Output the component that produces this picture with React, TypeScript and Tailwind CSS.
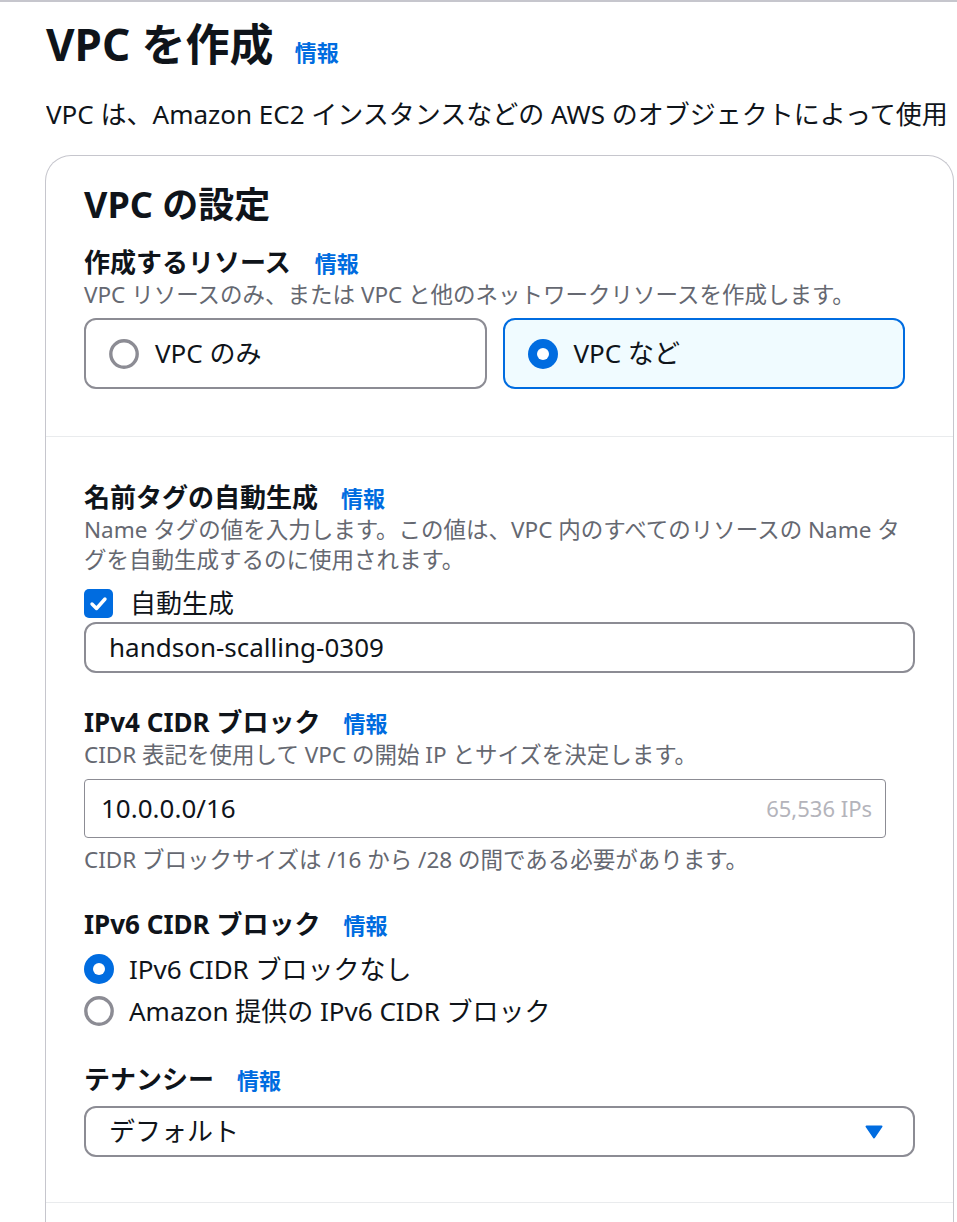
import React from 'react';

const Info = ({ className = '' }: { className?: string }) => (
  <span className={`text-[22px] font-bold text-[#006ce0] ${className}`}>情報</span>
);

const FieldLabel = ({ children, gap = 'ml-[23px]' }: { children: React.ReactNode; gap?: string }) => (
  <div className="flex items-baseline h-[36px] leading-[36px]">
    <span className="text-[26px] font-bold text-[#0f141a]">{children}</span>
    <Info className={gap} />
  </div>
);

const Radio = ({ checked }: { checked: boolean }) => (
  <svg width="30" height="30" viewBox="0 0 30 30" className="shrink-0">
    {checked ? (
      <>
        <circle cx="15" cy="15" r="15" fill="#006ce0" />
        <circle cx="15" cy="15" r="6" fill="#ffffff" />
      </>
    ) : (
      <circle cx="15" cy="15" r="13.2" fill="#ffffff" stroke="#8c8c94" strokeWidth="3.4" />
    )}
  </svg>
);

export default function App() {
  return (
    <div className="min-h-screen w-full overflow-hidden bg-white text-[#0f141a] font-['Noto_Sans','Noto_Sans_CJK_JP',sans-serif]">
      <div className="h-[2px] bg-[#c6c6cd]" />

      <div className="pl-[46px]">
        <div className="flex items-baseline mt-[14px] h-[56px]">
          <h1 className="text-[44px] leading-[56px] font-bold">VPC を作成</h1>
          <Info className="ml-[21px]" />
        </div>
        <p className="mt-[24px] text-[26px] leading-[36px] whitespace-nowrap overflow-hidden">
          VPC は、Amazon EC2 インスタンスなどの AWS のオブジェクトによって使用
        </p>
      </div>

      {/* settings container */}
      <div className="ml-[45px] mt-[23px] w-[909px] border border-b-0 border-[#c6c6cd] rounded-t-[26px]">
        <div className="px-[38px] pt-[27px] pb-[47px]">
          <h2 className="text-[36px] leading-[44px] font-bold">VPC の設定</h2>
          <div className="mt-[17px]">
            <FieldLabel gap="ml-[24px]">作成するリソース</FieldLabel>
          </div>
          <p className="text-[22.5px] leading-[29px] text-[#656871] whitespace-nowrap">
            VPC リソースのみ、または VPC と他のネットワークリソースを作成します。
          </p>
          <div className="mt-[9px] grid grid-cols-2 gap-[16px] w-[821px]">
            <div className="h-[71px] border-2 border-[#8c8c94] rounded-[12px] flex items-center pl-[23px] gap-[16px]">
              <Radio checked={false} />
              <span className="text-[26px]">VPC のみ</span>
            </div>
            <div className="h-[71px] border-2 border-[#006ce0] bg-[#f0fbff] rounded-[12px] flex items-center pl-[23px] gap-[16px]">
              <Radio checked />
              <span className="text-[26px]">VPC など</span>
            </div>
          </div>
        </div>

        <div className="border-t border-[#e9ebed] px-[38px] pt-[42px] pb-[45px]">
          {/* name tag */}
          <FieldLabel>名前タグの自動生成</FieldLabel>
          <p className="text-[22.5px] leading-[30px] text-[#656871] whitespace-nowrap">
            Name タグの値を入力します。この値は、VPC 内のすべてのリソースの Name タ
            <br />
            グを自動生成するのに使用されます。
          </p>
          <div className="mt-[10px] h-[36px] flex items-center gap-[17px]">
            <div className="w-[29px] h-[29px] rounded-[5px] bg-[#006ce0] flex items-center justify-center">
              <svg width="21" height="21" viewBox="0 0 21 21">
                <path d="M4 11l4.5 4.5L17 6" fill="none" stroke="#ffffff" strokeWidth="3.4" strokeLinecap="round" strokeLinejoin="round" />
              </svg>
            </div>
            <span className="text-[26px]">自動生成</span>
          </div>
          <div className="mt-[1px] h-[51px] border-2 border-[#8c8c94] rounded-[12px] flex items-center px-[23px]">
            <span className="text-[26px]">handson-scalling-0309</span>
          </div>

          {/* ipv4 */}
          <div className="mt-[31px]">
            <FieldLabel>IPv4 CIDR ブロック</FieldLabel>
          </div>
          <p className="text-[22.5px] leading-[29px] text-[#656871] whitespace-nowrap">
            CIDR 表記を使用して VPC の開始 IP とサイズを決定します。
          </p>
          <div className="mt-[10px] w-[802px] h-[59px] border border-[#8c8c94] rounded-[4px] flex items-center justify-between pl-[16px] pr-[13px]">
            <span className="text-[26px]">10.0.0.0/16</span>
            <span className="text-[22px] text-[#b4b4bb]">65,536 IPs</span>
          </div>
          <p className="mt-[7px] text-[22.5px] leading-[29px] text-[#656871] whitespace-nowrap">
            CIDR ブロックサイズは /16 から /28 の間である必要があります。
          </p>

          {/* ipv6 */}
          <div className="mt-[32px]">
            <FieldLabel>IPv6 CIDR ブロック</FieldLabel>
          </div>
          <div className="mt-[6px]">
            <div className="h-[42px] flex items-center gap-[15px]">
              <Radio checked />
              <span className="text-[26px]">IPv6 CIDR ブロックなし</span>
            </div>
            <div className="h-[42px] flex items-center gap-[15px]">
              <Radio checked={false} />
              <span className="text-[26px]">Amazon 提供の IPv6 CIDR ブロック</span>
            </div>
          </div>

          {/* tenancy */}
          <div className="mt-[29px]">
            <FieldLabel>テナンシー</FieldLabel>
          </div>
          <div className="mt-[9px] h-[51px] border-2 border-[#8c8c94] rounded-[12px] flex items-center justify-between pl-[23px] pr-[29px]">
            <span className="text-[26px]">デフォルト</span>
            <svg width="20" height="16" viewBox="0 0 20 16">
              <path d="M2.5 2.5h15L10 13.5z" fill="#006ce0" stroke="#006ce0" strokeWidth="2" strokeLinejoin="round" />
            </svg>
          </div>
        </div>

        <div className="border-t border-[#e9ebed] h-[60px]" />
      </div>
    </div>
  );
}
